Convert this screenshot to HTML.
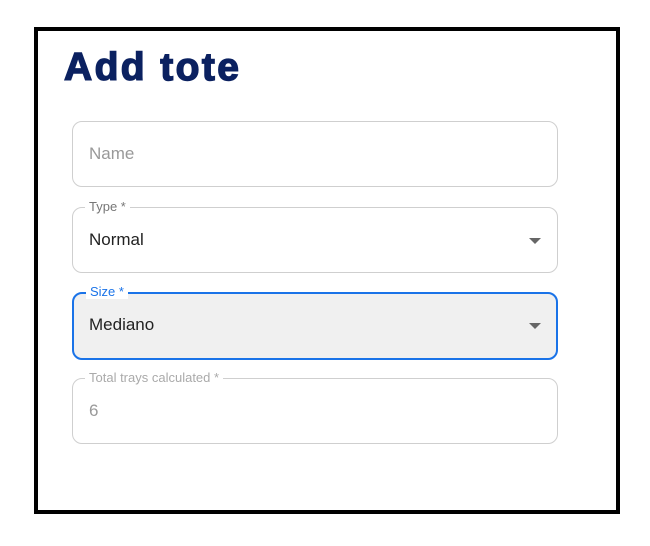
<!DOCTYPE html>
<html><head><style>
body{margin:0;width:650px;height:546px;background:#fff;position:relative;font-family:"Liberation Sans",sans-serif;overflow:hidden}
.frame{position:absolute;left:34px;top:27px;width:578px;height:479px;border:4px solid #000}
h1{position:absolute;left:64px;top:48px;margin:0;font-size:39px;line-height:39px;font-weight:700;color:#0b2160;-webkit-text-stroke:1.4px #0b2160;font-family:"Liberation Sans",sans-serif;letter-spacing:2.4px}
.f{position:absolute;left:72px;width:484px;height:64px;border:1px solid #cfcfcf;border-radius:10px;box-sizing:content-box}
.f .v{position:absolute;left:16px;top:22px;font-size:17px;color:#222}
.f .l{position:absolute;left:12px;top:-9px;background:#fff;padding:0 4px;font-size:13px;color:#777}
.arrow{position:absolute;right:16px;top:30px;width:0;height:0;border-left:6px solid transparent;border-right:6px solid transparent;border-top:6px solid #666}
</style></head><body>
<div class="frame"></div>
<h1>Add tote</h1>
<div class="f" style="top:121px"><div class="v" style="color:#999">Name</div></div>
<div class="f" style="top:207px"><div class="l">Type *</div><div class="v">Normal</div><div class="arrow"></div></div>
<div class="f" style="top:292px;border:2px solid #1a73e8;left:72px;width:482px;background:#f0f0f0"><div class="l" style="color:#1a73e8;background:#fff;top:-10px">Size *</div><div class="v" style="top:21px;left:15px">Mediano</div><div class="arrow" style="right:15px;top:29px"></div></div>
<div class="f" style="top:378px"><div class="l" style="color:#aaa">Total trays calculated *</div><div class="v" style="color:#999">6</div></div>
</body></html>
